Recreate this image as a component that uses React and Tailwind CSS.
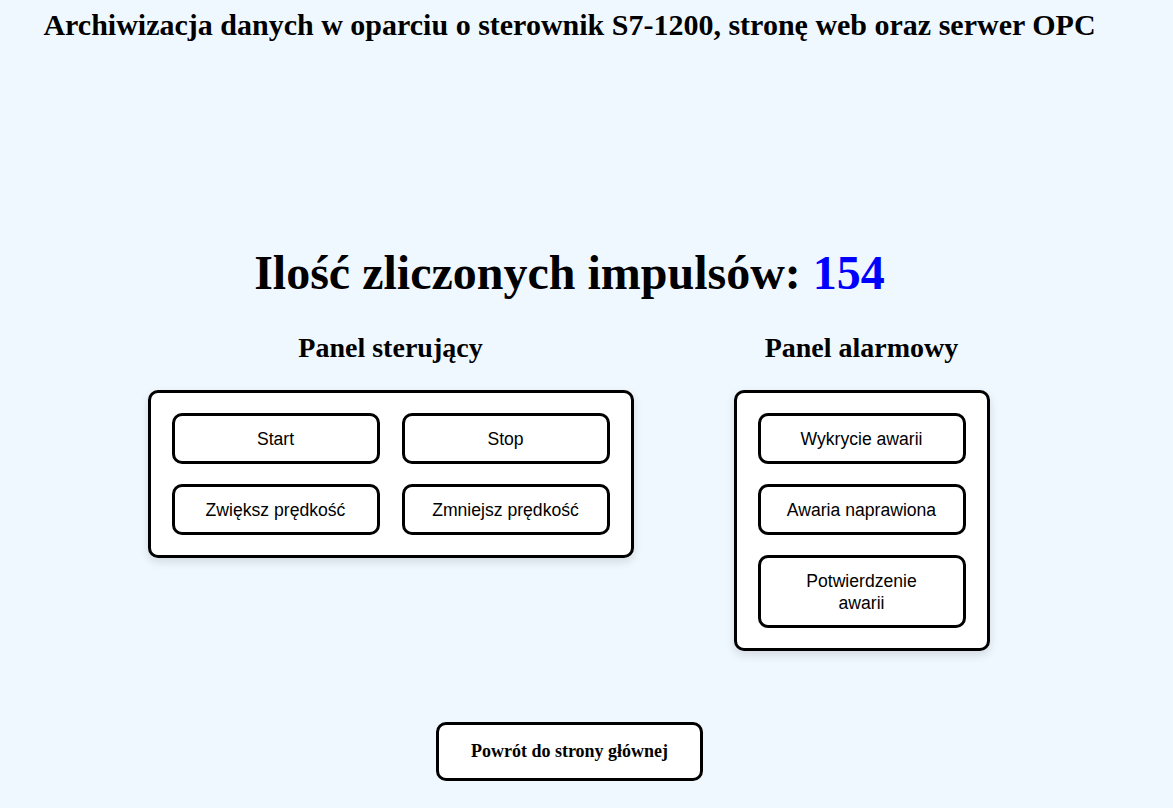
import React from 'react';

export default function App() {
  const controlButtons = ['Start', 'Stop', 'Zwiększ prędkość', 'Zmniejsz prędkość'];
  const alarmButtons = [['Wykrycie awarii'], ['Awaria naprawiona'], ['Potwierdzenie', 'awarii']];

  const btnClass =
    "w-[208px] bg-white border-[3px] border-black rounded-[10px] px-[16px] pt-[12px] pb-[11px] text-[17.6px] leading-[22px] text-black font-['Liberation_Sans',Arial,sans-serif]";

  return (
    <div className="min-h-screen bg-[#f0f8ff] font-['Liberation_Serif','Times_New_Roman',serif] text-black">
      <div className="w-[1139px] flex flex-col items-center">
        {/* Page title */}
        <h1 className="pt-[8px] text-[30px] leading-[34px] font-bold">
          Archiwizacja danych w oparciu o sterownik S7-1200, stronę web oraz serwer OPC
        </h1>

        {/* Counter */}
        <h2 className="mt-[203px] text-[48px] leading-[56px] font-bold">
          Ilość zliczonych impulsów: <span className="text-[#0000ff]">154</span>
        </h2>

        <div className="mt-[31px] mr-[2px] flex items-start gap-[100px]">
          {/* Control panel */}
          <div className="flex flex-col items-center">
            <h3 className="text-[28px] leading-[32px] font-bold">Panel sterujący</h3>
            <div className="mt-[26px] bg-white border-[3px] border-black rounded-[10px] px-[21px] py-[20px] shadow-[0_4px_10px_rgba(0,0,0,0.12)] grid grid-cols-2 gap-x-[22px] gap-y-[20px]">
              {controlButtons.map((label) => (
                <button key={label} className={btnClass}>{label}</button>
              ))}
            </div>
          </div>

          {/* Alarm panel */}
          <div className="flex flex-col items-center">
            <h3 className="text-[28px] leading-[32px] font-bold">Panel alarmowy</h3>
            <div className="mt-[26px] bg-white border-[3px] border-black rounded-[10px] px-[21px] py-[20px] shadow-[0_4px_10px_rgba(0,0,0,0.12)] flex flex-col gap-[20px]">
              {alarmButtons.map((lines) => (
                <button key={lines.join(' ')} className={btnClass}>
                  {lines.map((l, i) => (
                    <React.Fragment key={i}>
                      {i > 0 && <br />}
                      {l}
                    </React.Fragment>
                  ))}
                </button>
              ))}
            </div>
          </div>
        </div>

        {/* Back button */}
        <button className="mt-[71px] w-[267px] h-[59px] bg-white border-[3px] border-black rounded-[10px] text-[18px] font-bold font-['Liberation_Serif','Times_New_Roman',serif]">
          Powrót do strony głównej
        </button>
      </div>
    </div>
  );
}
